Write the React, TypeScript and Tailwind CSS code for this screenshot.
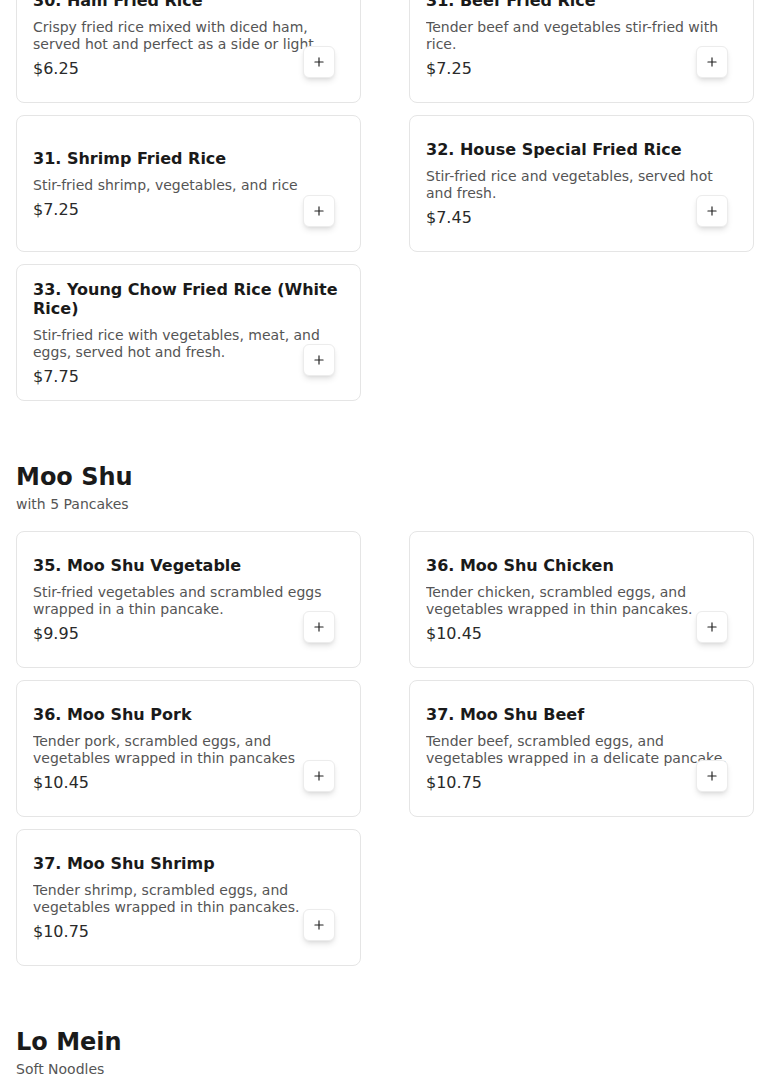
import React from "react";
import { Plus } from "lucide-react";

type Item = { name: string; desc: string; price: string };

const friedRice: Item[] = [
  { name: "30. Ham Fried Rice", desc: "Crispy fried rice mixed with diced ham, served hot and perfect as a side or light meal.", price: "$6.25" },
  { name: "31. Beef Fried Rice", desc: "Tender beef and vegetables stir-fried with rice.", price: "$7.25" },
  { name: "31. Shrimp Fried Rice", desc: "Stir-fried shrimp, vegetables, and rice", price: "$7.25" },
  { name: "32. House Special Fried Rice", desc: "Stir-fried rice and vegetables, served hot and fresh.", price: "$7.45" },
  { name: "33. Young Chow Fried Rice (White Rice)", desc: "Stir-fried rice with vegetables, meat, and eggs, served hot and fresh.", price: "$7.75" },
];

const mooShu: Item[] = [
  { name: "35. Moo Shu Vegetable", desc: "Stir-fried vegetables and scrambled eggs wrapped in a thin pancake.", price: "$9.95" },
  { name: "36. Moo Shu Chicken", desc: "Tender chicken, scrambled eggs, and vegetables wrapped in thin pancakes.", price: "$10.45" },
  { name: "36. Moo Shu Pork", desc: "Tender pork, scrambled eggs, and vegetables wrapped in thin pancakes", price: "$10.45" },
  { name: "37. Moo Shu Beef", desc: "Tender beef, scrambled eggs, and vegetables wrapped in a delicate pancake.", price: "$10.75" },
  { name: "37. Moo Shu Shrimp", desc: "Tender shrimp, scrambled eggs, and vegetables wrapped in thin pancakes.", price: "$10.75" },
];

function Card({ item }: { item: Item }) {
  return (
    <div className="relative h-[137px] rounded-lg border border-[#e5e5e5] bg-white px-4 flex flex-col justify-center">
      <div className="text-[16px] leading-[19px] font-bold text-[#1a1a1a]">{item.name}</div>
      <div className="mt-[9px] text-[14px] leading-[17px] text-[#555555] line-clamp-2">{item.desc}</div>
      <div className="mt-[6px] text-[16px] leading-[19px] text-[#2a2a2a]">{item.price}</div>
      <button className="absolute right-[25px] bottom-6 w-8 h-8 rounded-md border border-[#ececec] bg-white shadow-md flex items-center justify-center text-[#222]">
        <Plus size={14} strokeWidth={2} />
      </button>
    </div>
  );
}

function Grid({ items }: { items: Item[] }) {
  return (
    <div className="grid grid-cols-2 gap-x-12 gap-y-3">
      {items.map((it, i) => (
        <Card key={i} item={it} />
      ))}
    </div>
  );
}

function Heading({ title, sub }: { title: string; sub: string }) {
  return (
    <div className="mt-[60px] mb-[17px]">
      <h2 className="text-[24px] leading-[32px] font-bold text-[#1a1a1a]">{title}</h2>
      <div className="mt-[1px] text-[14px] leading-[20px] text-[#555555]">{sub}</div>
    </div>
  );
}

export default function App() {
  return (
    <div className="min-h-screen bg-white overflow-hidden" style={{ fontFamily: '"DejaVu Sans", sans-serif' }}>
      <div className="px-4 mt-[-34px]">
        <Grid items={friedRice} />
        <Heading title="Moo Shu" sub="with 5 Pancakes" />
        <Grid items={mooShu} />
        <Heading title="Lo Mein" sub="Soft Noodles" />
        <div className="h-40" />
      </div>
    </div>
  );
}
